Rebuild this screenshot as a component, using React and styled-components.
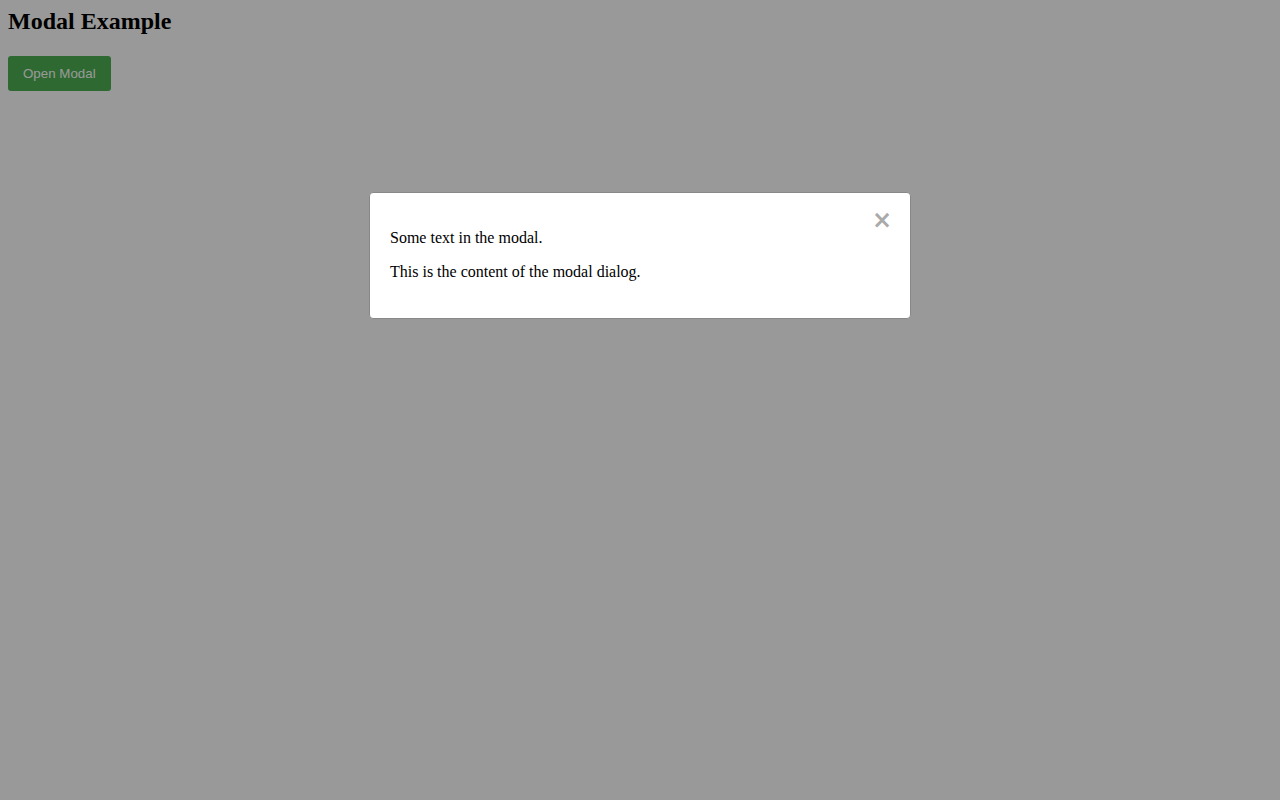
import * as React from "react";
import styled, { createGlobalStyle } from "styled-components";

const GlobalStyle = createGlobalStyle`
  body {
    margin: 8px;
    font-family: "Liberation Serif", "Times New Roman", serif;
    background: #ffffff;
  }
`;

const Title = styled.h2`
  font-size: 24px;
  font-weight: bold;
  margin: 0 0 20.5px;
`;

const OpenButton = styled.button`
  display: block;
  background-color: #4caf50;
  color: #ffffff;
  border: none;
  border-radius: 3px;
  padding: 10px 15px;
  font-family: "Liberation Sans", Arial, sans-serif;
  font-size: 13.333px;
  cursor: pointer;
`;

const Overlay = styled.div`
  position: fixed;
  inset: 0;
  background-color: rgba(0, 0, 0, 0.4);
  display: flex;
  justify-content: center;
  align-items: flex-start;
  padding-top: 192px;
`;

const ModalBox = styled.div`
  box-sizing: border-box;
  width: 542px;
  background: #ffffff;
  border: 1px solid #888;
  border-radius: 4px;
  padding: 20px 20px 21px;
  font-size: 16px;
  color: #000;
`;

const Close = styled.span`
  float: right;
  color: #aaa;
  font-family: "DejaVu Sans", sans-serif;
  font-size: 24px;
  font-weight: bold;
  line-height: 14px;
  margin: 0 -2px 0 0;
  cursor: pointer;
`;

const Text = styled.p`
  margin: 16px 0;
`;

export default function App() {
  return (
    <>
      <GlobalStyle />
      <Title>Modal Example</Title>
      <OpenButton>Open Modal</OpenButton>
      <Overlay>
        <ModalBox>
          <Close>×</Close>
          <Text>Some text in the modal.</Text>
          <Text>This is the content of the modal dialog.</Text>
        </ModalBox>
      </Overlay>
    </>
  );
}
